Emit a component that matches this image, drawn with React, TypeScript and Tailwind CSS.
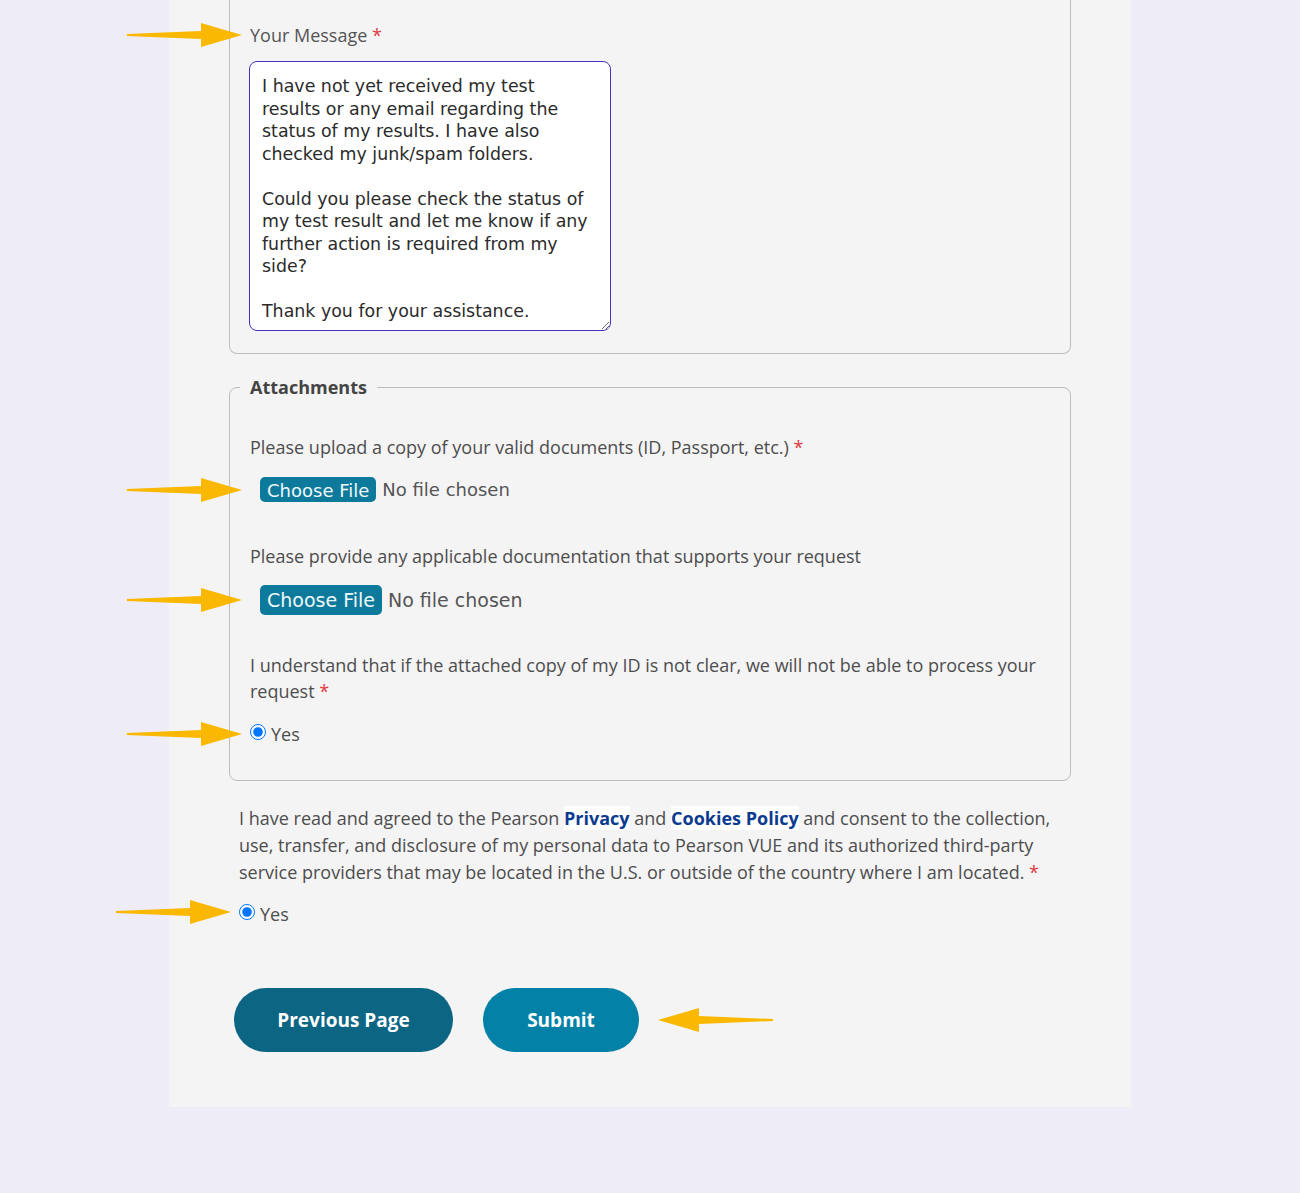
const MESSAGE = `I have not yet received my test
results or any email regarding the
status of my results. I have also
checked my junk/spam folders.

Could you please check the status of
my test result and let me know if any
further action is required from my
side?

Thank you for your assistance.`

function Arrow({ className, left = false }: { className: string; left?: boolean }) {
  return (
    <svg
      viewBox="0 0 116 26"
      className={`pointer-events-none absolute h-[26px] w-[116px] ${left ? '-scale-x-100' : ''} ${className}`}
      aria-hidden="true"
    >
      <path d="M0 12 L74 9 L74 1 L115 13 L74 25 L74 17 L0 14 Z" fill="#fbb800" />
    </svg>
  )
}

function Req() {
  return <span className="text-[#e0393e]"> *</span>
}

function FileInput({ big = false }: { big?: boolean }) {
  return (
    <div className="ml-[10px] flex items-center gap-[6px] font-['DejaVu_Sans',sans-serif] text-[#555]">
      <button
        type="button"
        className={`rounded-[5px] bg-[#0e7a9b] text-[#eef8fb] ${
          big ? 'h-[30px] px-[7px] text-[19px]' : 'h-[25px] px-[7px] text-[18px]'
        }`}
      >
        Choose File
      </button>
      <span className={big ? 'text-[19px]' : 'text-[18px]'}>No file chosen</span>
    </div>
  )
}

function RadioYes() {
  return (
    <label className="flex items-center gap-[5px] text-[18px] leading-6 text-[#4d4d4d]">
      <input type="radio" checked readOnly className="-mt-[5px] m-0 h-4 w-4" />
      <span>Yes</span>
    </label>
  )
}

export default function App() {
  return (
    <div className="relative min-h-[1193px] bg-[#eeecf6] font-['Open_Sans',sans-serif] text-[#4d4d4d]">
      <div className="mx-auto w-[962px] bg-[#f4f4f5] px-[60px] pb-[55px]">
        {/* message box, top cut off */}
        <div className="rounded-b-[8px] border-x border-b border-[#bdbdbd] pl-5 pt-[23px] pb-[22px]">
          <div className="text-[18px] leading-6 text-[#555]">
            Your Message
            <Req />
          </div>
          <textarea
            readOnly
            value={MESSAGE}
            className="-ml-px mt-[14px] block h-[270px] w-[362px] resize-y overflow-hidden rounded-[8px] border-[1.5px] border-[#4b2fbf] bg-white px-[12px] pt-[13px] font-['DejaVu_Sans',sans-serif] text-[17.4px] leading-[22.5px] text-[#2b2b2b] outline-none whitespace-pre"
          />
        </div>

        <fieldset className="mt-[21px] rounded-[8px] border border-[#bdbdbd] px-5 pb-[34px] pt-[36px]">
          <legend className="-ml-2.5 px-2.5 text-[18px] font-bold leading-6 text-[#444]">Attachments</legend>
          <p className="text-[18px] leading-6">
            Please upload a copy of your valid documents (ID, Passport, etc.)
            <Req />
          </p>
          <div className="mt-[17px]">
            <FileInput />
          </div>
          <p className="mt-[41px] text-[18px] leading-6">
            Please provide any applicable documentation that supports your request
          </p>
          <div className="mt-[17px]">
            <FileInput big />
          </div>
          <p className="mt-[37px] text-[18px] leading-[26px]">
            I understand that if the attached copy of my ID is not clear, we will not be able to process your
            <br />
            request
            <Req />
          </p>
          <div className="mt-[18px]">
            <RadioYes />
          </div>
        </fieldset>

        <div className="ml-[10px] mt-6 text-[18px] leading-[27px]">
          <p>
            I have read and agreed to the Pearson{' '}
            <a href="#privacy" className="bg-white font-bold text-[#0b3b8f]">Privacy</a> and{' '}
            <a href="#cookies" className="bg-white font-bold text-[#0b3b8f]">Cookies Policy</a> and consent to the
            collection,
            <br />
            use, transfer, and disclosure of my personal data to Pearson VUE and its authorized third-party
            <br />
            service providers that may be located in the U.S. or outside of the country where I am located.
            <Req />
          </p>
          <div className="mt-4">
            <RadioYes />
          </div>
        </div>

        <div className="ml-[5px] mt-[62px] flex gap-[30px]">
          <button
            type="button"
            className="h-16 w-[219px] rounded-full bg-[#0b6583] text-[19px] font-bold text-white"
          >
            Previous Page
          </button>
          <button
            type="button"
            className="h-16 w-[156px] rounded-full bg-[#0481a6] text-[19px] font-bold text-white"
          >
            Submit
          </button>
        </div>
      </div>

      {/* annotation arrows */}
      <Arrow className="left-[127px] top-[22px]" />
      <Arrow className="left-[127px] top-[477px]" />
      <Arrow className="left-[127px] top-[587px]" />
      <Arrow className="left-[127px] top-[721px]" />
      <Arrow className="left-[116px] top-[899px]" />
      <Arrow left className="left-[657px] top-[1007px]" />
    </div>
  )
}
